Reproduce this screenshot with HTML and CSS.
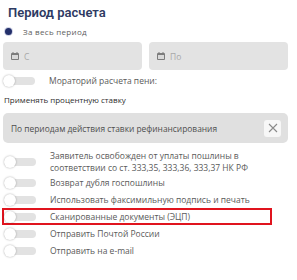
FILE: index.html
```html
<!DOCTYPE html>
<html lang="ru">
<head>
<meta charset="utf-8">
<link rel="stylesheet" href="styles.css">
</head>
<body>
<div class="panel">
  <h2 class="title">Период расчета</h2>
  <div class="radio-row"><span class="radio"></span><span class="radio-label">За весь период</span></div>
  <div class="dates">
    <div class="date"><svg class="cal" viewBox="0 0 8 8" width="8" height="8"><rect x="0" y="1" width="8" height="7" rx="1" fill="#7c7c7c"/><rect x="1" y="3" width="6" height="4" fill="#d9d9d9"/><rect x="1.5" y="0" width="1" height="2" fill="#7c7c7c"/><rect x="5.5" y="0" width="1" height="2" fill="#7c7c7c"/></svg><span class="ph">С</span></div>
    <div class="date"><svg class="cal" viewBox="0 0 8 8" width="8" height="8"><rect x="0" y="1" width="8" height="7" rx="1" fill="#7c7c7c"/><rect x="1" y="3" width="6" height="4" fill="#d9d9d9"/><rect x="1.5" y="0" width="1" height="2" fill="#7c7c7c"/><rect x="5.5" y="0" width="1" height="2" fill="#7c7c7c"/></svg><span class="ph">По</span></div>
  </div>
  <div class="toggle-row moratorium"><span class="toggle"></span><span class="tlabel">Мораторий расчета пени:</span></div>
  <div class="sub">Применять процентную ставку</div>
  <div class="select"><span class="sel-text">По периодам действия ставки рефинансирования</span><span class="clear"><svg viewBox="0 0 10 10" width="10" height="10"><path d="M1 1L9 9M9 1L1 9" stroke="#8a8a8a" stroke-width="1.1" fill="none"/></svg></span></div>
  <div class="list">
    <div class="toggle-row two"><span class="toggle"></span><span class="tlabel">Заявитель освобожден от уплаты пошлины в<br>соответствии со ст. 333,35, 333,36, 333,37 НК РФ</span></div>
    <div class="toggle-row"><span class="toggle"></span><span class="tlabel">Возврат дубля госпошлины</span></div>
    <div class="toggle-row"><span class="toggle"></span><span class="tlabel">Использовать факсимильную подпись и печать</span></div>
    <div class="toggle-row marked"><span class="toggle"></span><span class="tlabel">Сканированные документы (ЭЦП)</span></div>
    <div class="toggle-row"><span class="toggle"></span><span class="tlabel">Отправить Почтой России</span></div>
    <div class="toggle-row"><span class="toggle"></span><span class="tlabel">Отправить на e-mail</span></div>
  </div>
</div>
</body>
</html>
```
FILE: styles.css
```css
html, body { margin: 0; padding: 0; background: #fff; }
body { width: 297px; height: 280px; overflow: hidden; font-family: "Open Sans", "DejaVu Sans", sans-serif; color: #5b5b5b; }
.panel { padding: 0 9px 0 3px; display: flex; flex-direction: column; }
.title { margin: 5px 0 0 5px; font-size: 13px; font-weight: 600; color: #2e3a62; line-height: 16px; font-family: "Roboto", sans-serif; }
.radio-row { display: flex; align-items: center; margin-top: 5px; height: 11px; }
.radio { width: 7px; height: 7px; border-radius: 50%; background: #232f6a; margin-left: 2px; box-shadow: 0 0 0 1px #d0d3e6; }
.radio-label { font-size: 8px; letter-spacing: 0.3px; margin-left: 11px; color: #5e5e5e; }
.dates { display: flex; gap: 7px; margin-top: 5px; }
.date { flex: 1; height: 28px; background: #e3e3e3; border-radius: 4px; display: flex; align-items: center; padding-left: 8px; }
.cal { margin-right: 5px; }
.ph { font-size: 8.5px; color: #a8a8a8; }
.toggle-row { display: flex; align-items: center; box-sizing: border-box; }
.toggle { position: relative; flex: none; width: 32px; height: 8px; background: #e2e2e2; border-radius: 4px; margin-right: 14px; }
.toggle::before { content: ""; position: absolute; left: 0; top: -2px; width: 12px; height: 12px; border-radius: 50%; background: #fff; box-shadow: 0 0 2px rgba(0,0,0,0.35); }
.tlabel { font-size: 8.5px; line-height: 12px; color: #5a5a5a; }
.moratorium { margin-top: 5px; height: 12px; }
.sub { font-size: 8px; font-weight: 500; color: #2d2d2d; margin-top: 7px; margin-left: 1px; line-height: 11px; }
.select { margin-top: 8px; height: 30px; background: #e0e0e0; border-radius: 5px; display: flex; align-items: center; padding: 0 7px 0 8px; }
.sel-text { flex: 1; font-size: 8.4px; color: #4e4e4e; }
.clear { width: 17px; height: 17px; background: #f7f7f7; border-radius: 3px; display: flex; align-items: center; justify-content: center; }
.list { margin-top: 7px; display: flex; flex-direction: column; }
.list .toggle-row { height: 17px; border: 2px solid transparent; margin-left: -1px; margin-right: 16px; }
.list .toggle-row.two { height: 24px; border: 0; padding-left: 2px; }
.list .toggle-row.marked { border-color: #e0141e; }
```
